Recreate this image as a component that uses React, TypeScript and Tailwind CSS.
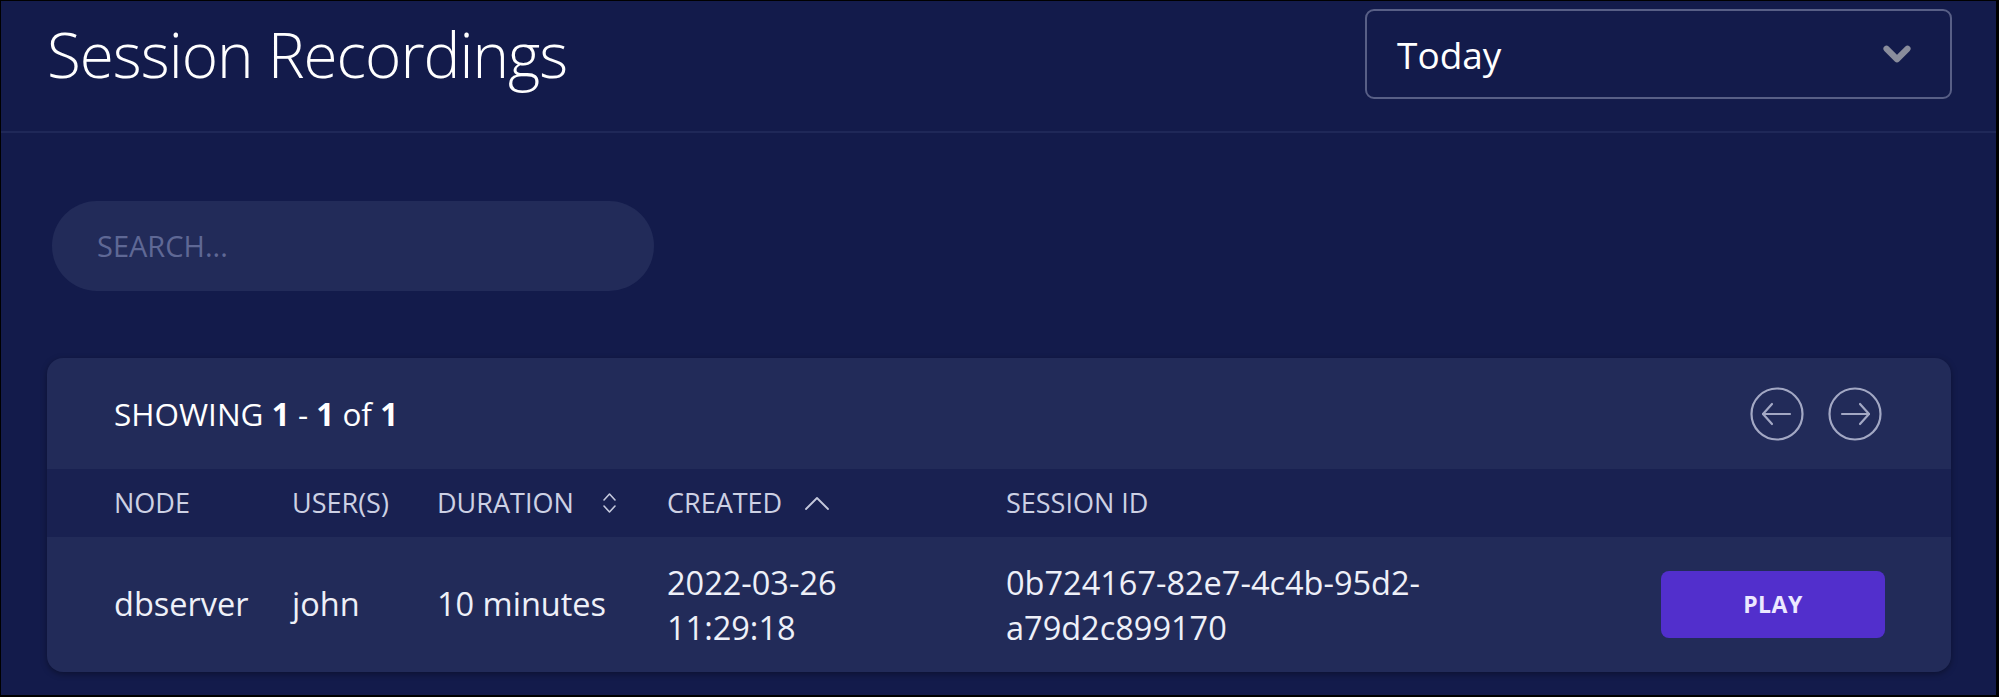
import React from 'react';
import { ChevronDown } from 'lucide-react';

const font = { fontFamily: '"Open Sans", "Noto Sans", sans-serif' };

const CircleArrow = ({ dir }: { dir: 'left' | 'right' }) => (
  <button className="w-[54px] h-[54px] flex items-center justify-center text-[#a3a8c4]">
    <svg width="54" height="54" viewBox="0 0 54 54" fill="none" stroke="currentColor" strokeWidth="2.2" strokeLinecap="round" strokeLinejoin="round">
      <circle cx="27" cy="27" r="25.5" />
      {dir === 'left' ? (
        <>
          <path d="M13 27h27" />
          <path d="M22 17l-9 10 9 10" />
        </>
      ) : (
        <>
          <path d="M14 27h27" />
          <path d="M32 17l9 10-9 10" />
        </>
      )}
    </svg>
  </button>
);

const App: React.FC = () => {
  return (
    <div
      className="w-full h-[697px] bg-[#131b4b] text-white border-black border-l border-t border-r-[3px] border-b-2 flex flex-col"
      style={font}
    >
      {/* Header */}
      <div className="h-[132px] shrink-0 flex justify-between items-start pt-[8px] pl-[46px] pr-[44px] border-b-2 border-[#1f2858]">
        <h1 className="text-[62px] font-light leading-[90px] tracking-[-1px]">Session Recordings</h1>
        <div className="w-[587px] h-[90px] rounded-[9px] border-2 border-[#585f86] flex items-center justify-between pl-[30px] pr-[32px]">
          <span className="text-[37px] leading-none">Today</span>
          <ChevronDown className="w-[42px] h-[42px] text-[#8a8d9c]" strokeWidth={3.5} />
        </div>
      </div>

      {/* Search */}
      <div className="pl-[51px] pt-[68px]">
        <div className="w-[602px] h-[90px] rounded-full bg-[#222b59] flex items-center pl-[45px]">
          <input
            placeholder="SEARCH..."
            className="bg-transparent outline-none text-[29px] text-white placeholder:text-[#5f6895] w-full"
          />
        </div>
      </div>

      {/* Card */}
      <div className="mt-[67px] ml-[46px] mr-[45px] rounded-[16px] bg-[#222b59] shadow-[0_2px_6px_rgba(0,0,0,0.35)] overflow-hidden">
        <div className="h-[111px] flex items-center justify-between pl-[67px] pr-[69px]">
          <div className="text-[31.5px]">
            SHOWING <span className="font-bold">1</span> - <span className="font-bold">1</span> of <span className="font-bold">1</span>
          </div>
          <div className="flex gap-[24px]">
            <CircleArrow dir="left" />
            <CircleArrow dir="right" />
          </div>
        </div>

        <div className="grid grid-cols-[178px_145px_230px_339px_440px_1fr] pl-[67px] pr-[66px]">
          {/* head */}
          <div className="contents text-[27px] text-[#cdd1e4]">
            <div className="h-[68px] flex items-center bg-[#192151] -ml-[67px] pl-[67px]">NODE</div>
            <div className="h-[68px] flex items-center bg-[#192151]">USER(S)</div>
            <div className="h-[68px] flex items-center bg-[#192151] gap-[28px]">
              DURATION
              <svg width="15" height="24" viewBox="0 0 15 24" fill="none" stroke="#c4c8dc" strokeWidth="1.6" strokeLinecap="round" strokeLinejoin="round">
                <path d="M2 9l5.5-6 5.5 6" />
                <path d="M2 15l5.5 6 5.5-6" />
              </svg>
            </div>
            <div className="h-[68px] flex items-center bg-[#192151] gap-[22px]">
              CREATED
              <svg width="26" height="16" viewBox="0 0 26 16" fill="none" stroke="#c4c8dc" strokeWidth="1.8" strokeLinecap="round" strokeLinejoin="round">
                <path d="M2 14l11-11 11 11" />
              </svg>
            </div>
            <div className="h-[68px] flex items-center bg-[#192151]">SESSION ID</div>
            <div className="h-[68px] bg-[#192151] -mr-[66px]"></div>
          </div>

          {/* row */}
          <div className="contents text-[32.5px] text-[#eef0f8]">
            <div className="h-[135px] flex items-center">dbserver</div>
            <div className="h-[135px] flex items-center">john</div>
            <div className="h-[135px] flex items-center">10 minutes</div>
            <div className="h-[135px] flex items-center leading-[45px]">
              2022-03-26
              <br />
              11:29:18
            </div>
            <div className="h-[135px] flex items-center leading-[45px] pr-[10px]">
              0b724167-82e7-4c4b-95d2-a79d2c899170
            </div>
            <div className="h-[135px] flex items-center justify-end">
              <button className="w-[224px] h-[67px] rounded-[8px] bg-[#522fcc] text-[23px] font-bold tracking-[0.5px] text-[#ece8ff]">
                PLAY
              </button>
            </div>
          </div>
        </div>
      </div>
    </div>
  );
};

export default App;
